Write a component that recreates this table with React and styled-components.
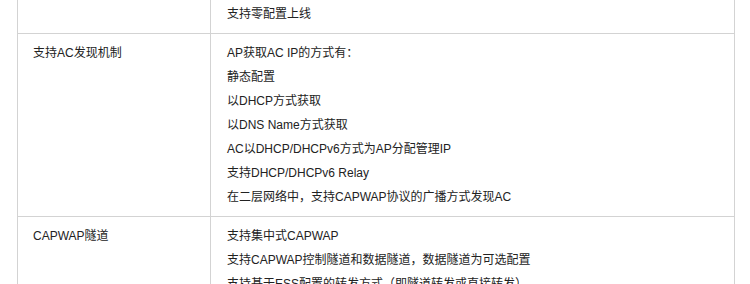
import React from "react";
import styled, { createGlobalStyle } from "styled-components";

const Global = createGlobalStyle`
  html, body { margin: 0; padding: 0; background: #fff; }
  body { overflow: hidden; }
`;

const Page = styled.div`
  height: 284px;
  overflow: hidden;
  padding-left: 17px;
  font-family: "Liberation Sans", "Noto Sans CJK SC", sans-serif;
  font-size: 12px;
  color: #222;
`;

const Table = styled.div`
  width: 718px;
  box-sizing: border-box;
  margin-top: -6px;
  border-left: 1px solid #d3d3d3;
  border-right: 1px solid #d3d3d3;
  border-top: 1px solid #d3d3d3;
`;

const Row = styled.div`
  display: grid;
  grid-template-columns: 193px 1fr;
  border-bottom: 1px solid #d3d3d3;
`;

const Cell = styled.div`
  padding: 7px 15px 7px ${(p) => (p.$first ? "15px" : "16px")};
  line-height: 24px;
  border-right: ${(p) => (p.$first ? "1px solid #d3d3d3" : "none")};
`;

const Line = styled.div`
  white-space: nowrap;
`;

const rows = [
  { name: "", items: ["支持零配置上线"] },
  {
    name: "支持AC发现机制",
    items: [
      "AP获取AC IP的方式有：",
      "静态配置",
      "以DHCP方式获取",
      "以DNS Name方式获取",
      "AC以DHCP/DHCPv6方式为AP分配管理IP",
      "支持DHCP/DHCPv6 Relay",
      "在二层网络中，支持CAPWAP协议的广播方式发现AC",
    ],
  },
  {
    name: "CAPWAP隧道",
    items: [
      "支持集中式CAPWAP",
      "支持CAPWAP控制隧道和数据隧道，数据隧道为可选配置",
      "支持基于ESS配置的转发方式（即隧道转发或直接转发）",
    ],
  },
];

export default function App() {
  return (
    <>
      <Global />
      <Page>
        <Table>
          {rows.map((r, i) => (
            <Row key={i}>
              <Cell $first>{r.name}</Cell>
              <Cell>
                {r.items.map((t, j) => (
                  <Line key={j}>{t}</Line>
                ))}
              </Cell>
            </Row>
          ))}
        </Table>
      </Page>
    </>
  );
}
